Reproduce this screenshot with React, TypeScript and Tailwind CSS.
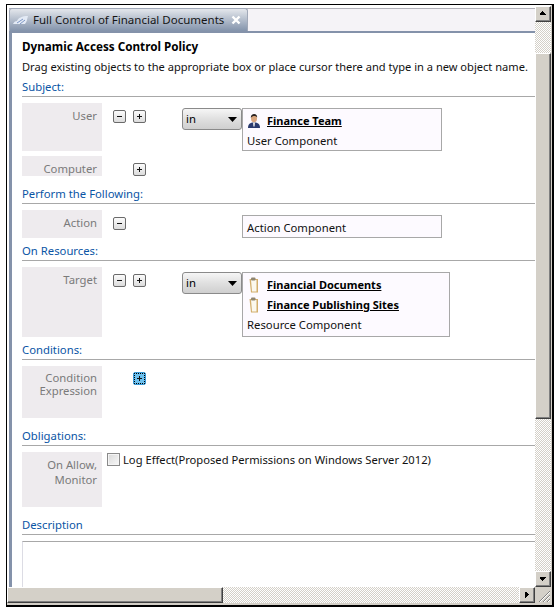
import React from 'react';

const dither = 'bg-[repeating-conic-gradient(#d4d0c8_0_25%,#ffffff_0_50%)] bg-[length:2px_2px]';
const bevel = 'bg-[#d4d0c8] border border-t-white border-l-white border-r-[#404040] border-b-[#404040] shadow-[inset_-1px_-1px_0_#808080]';

const Heading: React.FC<{ text: string; className?: string }> = ({ text, className = '' }) => (
  <div className={`h-[20px] border-b border-[#a8a8a8] text-[#0a55a5] leading-[19px] ${className}`}>{text}</div>
);

const SmallBtn: React.FC<{ kind: '-' | '+'; focused?: boolean }> = ({ kind, focused }) => (
  <div
    className={`w-[13px] h-[13px] rounded-[2px] border flex items-center justify-center ${
      focused
        ? 'border-[#3a9ad8] bg-[#6cc0ee] outline-1 outline-dotted outline-black -outline-offset-2'
        : 'border-[#6a6a6a] bg-gradient-to-b from-[#fbfbfb] to-[#dcdcdc]'
    }`}
  >
    <svg width="7" height="7" viewBox="0 0 7 7" shapeRendering="crispEdges">
      <rect x="1" y="3" width="5" height="1" fill="#111" />
      {kind === '+' && <rect x="3" y="1" width="1" height="5" fill="#111" />}
    </svg>
  </div>
);

const Label: React.FC<{ lines: string[]; className: string; lineClass?: string }> = ({ lines, className, lineClass = '' }) => (
  <div className={`w-[80px] shrink-0 bg-[#eeebee] text-right pr-[5px] text-[#7a7a7a] ${className}`}>
    {lines.map((l) => (
      <div key={l} className={lineClass}>{l}</div>
    ))}
  </div>
);

const Btns: React.FC<{ minus?: boolean; plus?: boolean; focused?: boolean; className?: string }> = ({ minus, plus, focused, className = 'pt-[7px]' }) => (
  <div className={`w-[80px] shrink-0 pl-[11px] flex items-start gap-[7px] ${className}`}>
    {minus ? <SmallBtn kind="-" /> : <div className="w-[13px]" />}
    {plus && <SmallBtn kind="+" focused={focused} />}
  </div>
);

const InSelect = () => (
  <div className="w-[60px] h-[22px] shrink-0 rounded-[3px] border border-[#8a8a8a] bg-gradient-to-b from-[#f6f6f6] via-[#e0e0e0] to-[#cfcfcf] flex items-center justify-between pl-[3px] pr-[4px]">
    <span className="text-black">in</span>
    <svg width="9" height="5" viewBox="0 0 9 5"><path d="M0 0h9L4.500 5z" fill="#000" /></svg>
  </div>
);

const UserIcon = () => (
  <svg width="14" height="16" viewBox="0 0 14 16" className="shrink-0">
    <path d="M1 15c0-4 2-5.500 6-5.500s6 1.500 6 5.500z" fill="#2b3a6e" />
    <path d="M6 9.500h2l-.4 4h-1.200z" fill="#e8e8e8" />
    <ellipse cx="7" cy="5.500" rx="3" ry="3.800" fill="#d9a57e" />
    <path d="M3.800 5c0-3 1.500-4 3.400-4s3 1.200 3 3.500c-1-1.500-2-1.500-3-1.500s-2.500.5-3.400 2z" fill="#2a2220" />
  </svg>
);

const ClipIcon = () => (
  <svg width="10" height="16" viewBox="0 0 10 16" className="shrink-0">
    <path d="M0.500 2h8.500v13.500H2z" fill="#d2ae6c" />
    <path d="M2 3h5.500v11.500H3z" fill="#fbf8ee" />
    <rect x="2" y="0.500" width="4.500" height="3" rx="1" fill="#8f8672" />
  </svg>
);

const Entry: React.FC<{ icon: React.ReactNode; text: string; className?: string }> = ({ icon, text, className = '' }) => (
  <div className={`flex items-center h-[20px] ${className}`}>
    <div className="w-[20px] pl-[2px] flex justify-center shrink-0 -ml-[1px]">{icon}</div>
    <span className="ml-[4px] text-[11px] font-bold underline text-black">{text}</span>
  </div>
);

const Arrow: React.FC<{ d: string }> = ({ d }) => (
  <svg width="14" height="14" viewBox="0 0 16 16" shapeRendering="crispEdges"><path d={d} fill="#000" /></svg>
);

export default function App() {
  return (
    <div className="w-[560px] h-[611px] bg-white pt-[4px] pl-[6px] text-[11.3px] leading-[20px] text-[#111] font-['Noto_Sans',sans-serif] overflow-hidden">
      <div className="w-[548px] h-[603px] bg-[#d4d0c8] border-t border-l border-black border-r-[2px] border-b-[2px] pr-px pb-[2px] flex flex-col">
        <div className="flex flex-1 min-h-0">
          {/* Main document area */}
          <div className="flex-1 min-w-0 bg-white pl-[2px] pt-[3px] flex flex-col">
            <div className="h-[23px] shrink-0 flex bg-[#f5f3f7] border-t border-[#b0b0b8]">
              <div className="w-[239px] -mt-px rounded-t-[3px] bg-gradient-to-b from-[#e4e7ec] to-[#8393ab] border border-b-0 border-[#a0a8b8] flex items-center pl-[3px] pr-[6px]">
                <svg width="16" height="10" viewBox="0 0 16 10" className="shrink-0">
                  <path d="M0 9c1-2 2-3 4-3 1-3 5-5 11-5-1 3-1 6-3 8z" fill="#e3eaf5" />
                  <path d="M4 8l6-4M7 9l5-4" stroke="#7d96c4" strokeWidth="1" />
                </svg>
                <span className="ml-[4px] text-[11.5px] text-[#151515] whitespace-nowrap">Full Control of Financial Documents</span>
                <svg width="10" height="10" viewBox="0 0 10 10" className="ml-auto shrink-0">
                  <path d="M1.500 1.500l7 7M8.500 1.500l-7 7" stroke="#fff" strokeWidth="2.400" />
                </svg>
              </div>
            </div>
            <div className="flex-1 min-h-0 border-t-[2px] border-l-[3px] border-[#8492aa] pt-[4px] pl-[10px] overflow-hidden">
              <div className="h-[20px] text-[11.7px] leading-[18px] font-bold text-black">Dynamic Access Control Policy</div>
              <div className="h-[20px] text-[11.1px] whitespace-nowrap">Drag existing objects to the appropriate box or place cursor there and type in a new object name.</div>

              <Heading text="Subject:" />
              <div className="flex h-[48px] mt-[6px]">
                <Label lines={['User']} className="h-[48px] pt-[3px]" />
                <Btns minus plus />
                <div className="pt-[5px] flex">
                  <InSelect />
                  <div className="w-[200px] h-[43px] border border-[#a8a8a8] bg-[#fdfaff] pl-[1px]">
                    <Entry icon={<UserIcon />} text="Finance Team" className="mt-[2px]" />
                    <div className="pl-[3px]">User Component</div>
                  </div>
                </div>
              </div>
              <div className="flex h-[20px] mt-[5px]">
                <Label lines={['Computer']} className="h-[20px] leading-[26px] overflow-hidden" />
                <Btns plus className="pt-[7px]" />
              </div>

              <Heading text="Perform the Following:" className="mt-[8px]" />
              <div className="flex h-[28px] mt-[6px]">
                <Label lines={['Action']} className="h-[28px] pt-[3px]" />
                <Btns minus className="pt-[7px]" />
                <div className="w-[60px] shrink-0" />
                <div className="w-[200px] h-[23px] mt-[5px] border border-[#a8a8a8] bg-[#fdfaff] pl-[4px] leading-[23px]">Action Component</div>
              </div>

              <Heading text="On Resources:" className="mt-[3px]" />
              <div className="flex h-[70px] mt-[6px]">
                <Label lines={['Target']} className="h-[70px] pt-[3px]" />
                <Btns minus plus className="pt-[7px]" />
                <div className="pt-[5px] flex">
                  <InSelect />
                  <div className="w-[208px] h-[65px] border border-[#a8a8a8] bg-[#fdfaff] pl-[1px]">
                    <Entry icon={<ClipIcon />} text="Financial Documents" className="mt-[2px]" />
                    <Entry icon={<ClipIcon />} text="Finance Publishing Sites" />
                    <div className="pl-[3px]">Resource Component</div>
                  </div>
                </div>
              </div>

              <Heading text="Conditions:" className="mt-[3px]" />
              <div className="flex h-[52px] mt-[6px]">
                <Label lines={['Condition', 'Expression']} className="h-[52px] pt-[5px]" lineClass="leading-[13px]" />
                <Btns plus focused className="pt-[6px]" />
              </div>

              <Heading text="Obligations:" className="mt-[8px]" />
              <div className="flex h-[55px] mt-[6px]">
                <Label lines={['On Allow,', 'Monitor']} className="h-[55px] pt-[5px]" lineClass="leading-[15px]" />
                <div className="flex items-start ml-[5px]">
                  <div className="w-[13px] h-[13px] mt-px border border-[#8a8a8a] bg-gradient-to-br from-[#d8d8d8] to-[#f8f8f8] shadow-[inset_0_0_0_1px_#f4f4f4]" />
                  <span className="ml-[3px] text-[11.2px] leading-[15px] whitespace-nowrap">Log Effect(Proposed Permissions on Windows Server 2012)</span>
                </div>
              </div>

              <Heading text="Description" className="mt-[8px]" />
              <div className="mt-[6px] h-[60px] border-t border-l border-[#a8a8a8] border-l-[#dcdce4]" />
            </div>
          </div>

          {/* Vertical scrollbar */}
          <div className="w-[16px] shrink-0 flex flex-col bg-white pt-px">
            <div className={`h-[16px] shrink-0 ${bevel} flex items-center justify-center`}>
              <Arrow d="M7 5h1v1h1v1h1v1h1v1H4V8h1V7h1V6h1z" />
            </div>
            <div className={`h-[31px] shrink-0 ${dither}`} />
            <div className={`h-[366px] shrink-0 ${bevel}`} />
            <div className={`flex-1 ${dither}`} />
            <div className={`h-[16px] shrink-0 ${bevel} flex items-center justify-center`}>
              <Arrow d="M4 6h7v1h-1v1H9v1H8v1H7V9H6V8H5V7H4z" />
            </div>
          </div>
        </div>

        {/* Horizontal scrollbar */}
        <div className="h-[16px] shrink-0 flex">
          <div className={`w-[216px] shrink-0 ${bevel}`} />
          <div className={`flex-1 ${dither}`} />
          <div className={`w-[16px] shrink-0 ${bevel} flex items-center justify-center`}>
            <Arrow d="M6 4h1v1h1v1h1v1h1v1H9v1H8v1H7v1H6z" />
          </div>
          <div className="w-[16px] shrink-0 bg-[#d4d0c8] flex items-end justify-end">
            <svg width="14" height="14" viewBox="0 0 14 14">
              <path d="M13 2L2 13M13 6l-7 7M13 10l-3 3" stroke="#808080" strokeWidth="1" />
              <path d="M13 3L3 13M13 7l-6 6M13 11l-2 2" stroke="#fff" strokeWidth="1" />
            </svg>
          </div>
        </div>
      </div>
    </div>
  );
}
